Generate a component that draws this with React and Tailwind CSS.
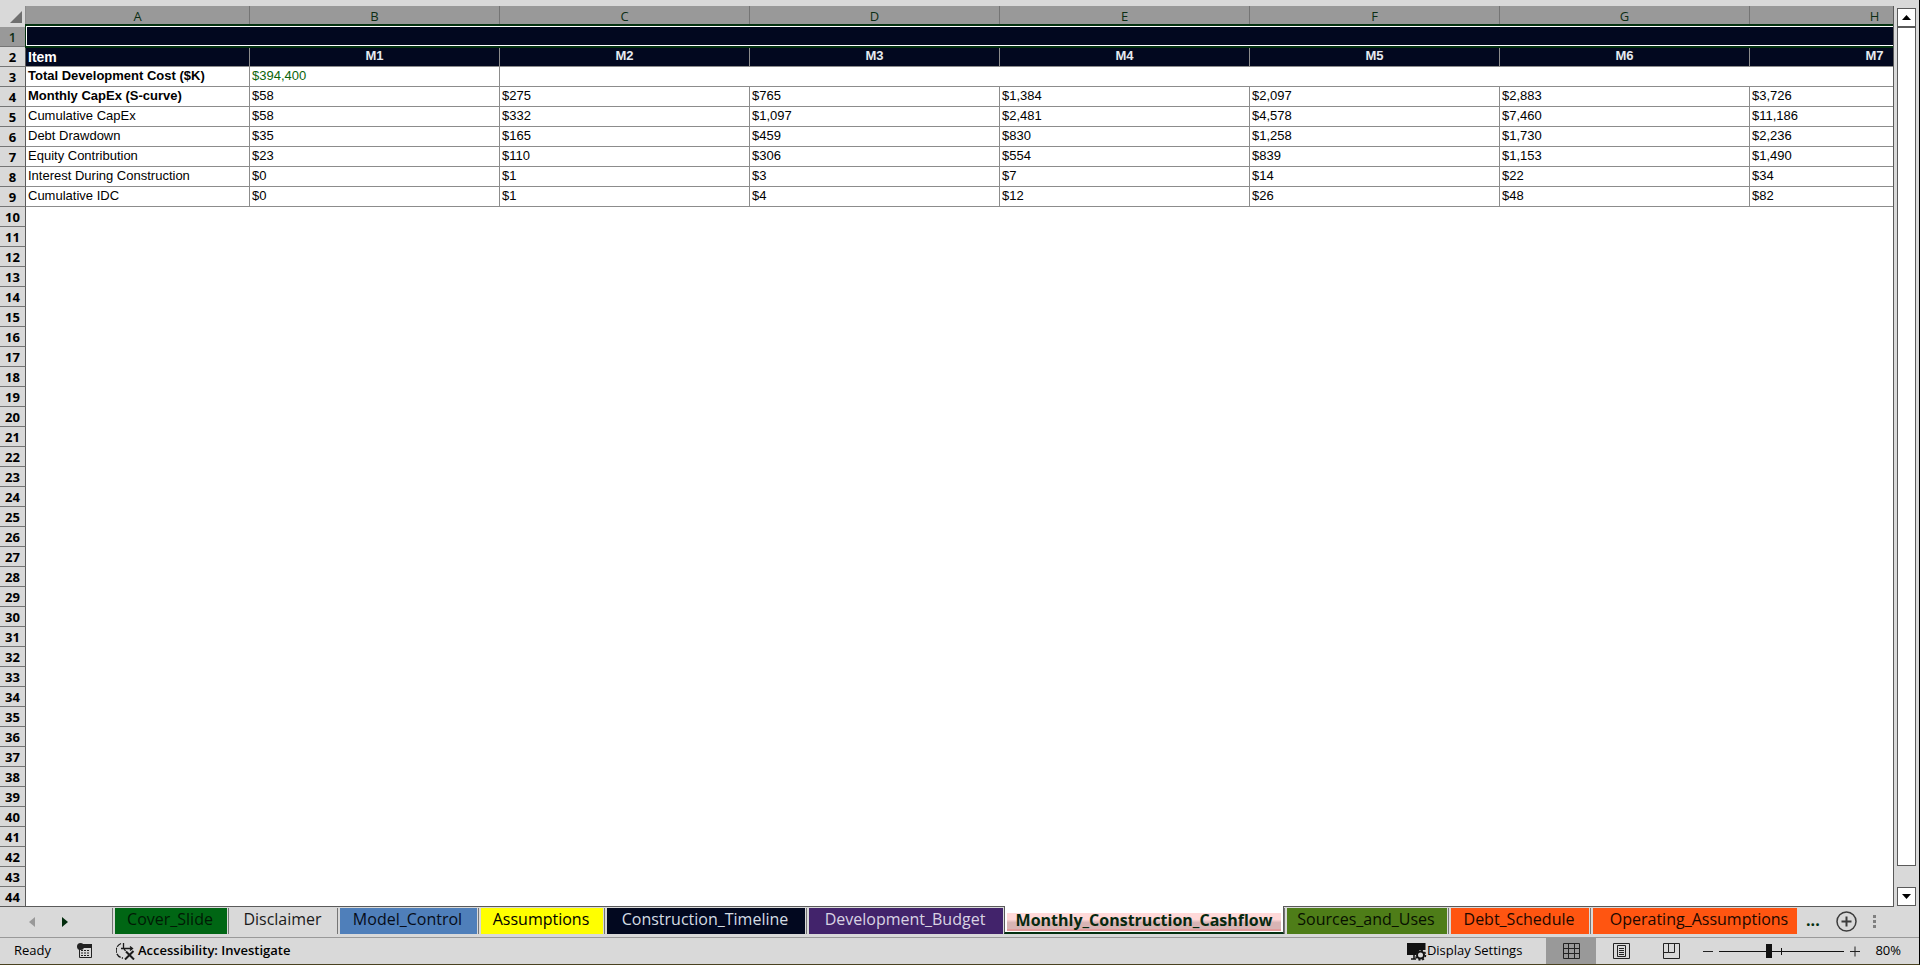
import React, { useState } from 'react';

const COLUMNS = ['A', 'B', 'C', 'D', 'E', 'F', 'G', 'H'];
const ROW_COUNT = 44;

const months = ['M1', 'M2', 'M3', 'M4', 'M5', 'M6', 'M7'];

const dataRows = {
  4: {
    label: 'Monthly CapEx (S-curve)',
    bold: true,
    values: ['$58', '$275', '$765', '$1,384', '$2,097', '$2,883', '$3,726'],
  },
  5: {
    label: 'Cumulative CapEx',
    values: ['$58', '$332', '$1,097', '$2,481', '$4,578', '$7,460', '$11,186'],
  },
  6: {
    label: 'Debt Drawdown',
    values: ['$35', '$165', '$459', '$830', '$1,258', '$1,730', '$2,236'],
  },
  7: {
    label: 'Equity Contribution',
    values: ['$23', '$110', '$306', '$554', '$839', '$1,153', '$1,490'],
  },
  8: {
    label: 'Interest During Construction',
    values: ['$0', '$1', '$3', '$7', '$14', '$22', '$34'],
  },
  9: {
    label: 'Cumulative IDC',
    values: ['$0', '$1', '$4', '$12', '$26', '$48', '$82'],
  },
};

const sheets = [
  { name: 'Cover_Slide', style: 'w-[112px] pr-[2px] bg-[#006614] text-[#001a05]' },
  { name: 'Disclaimer', style: 'w-[105px] pr-[2px] text-[#1a1a1a]' },
  { name: 'Model_Control', style: 'w-[137px] pr-[2px] bg-[#4f7fba] text-[#060c18]' },
  { name: 'Assumptions', style: 'w-[122px] pr-[2px] bg-[#ffff00] text-black' },
  { name: 'Construction_Timeline', style: 'w-[198px] pr-[2px] bg-[#02081f] text-[#d4dce4]' },
  { name: 'Development_Budget', style: 'w-[194px] pr-[2px] bg-[#42236b] text-[#d9d3e3]' },
  { name: 'Monthly_Construction_Cashflow', style: '' },
  { name: 'Sources_and_Uses', style: 'w-[160px] pr-[2px] bg-[#4e7d18] text-[#081000]' },
  { name: 'Debt_Schedule', style: 'w-[138px] pr-[2px] bg-[#ff5511] text-[#1c0800]' },
  { name: 'Operating_Assumptions', style: 'w-[204px] pl-2 bg-[#ff5511] text-[#1c0800]' },
];

const cellBorder = 'border-b border-r border-[#8c8c8c]';

function RowCells({ row }) {
  if (row === 1) {
    return <td colSpan={8} className="bg-[#02081f]"></td>;
  }

  if (row === 2) {
    return (
      <>
        <th className={`${cellBorder} bg-[#02081f] pl-[2px] text-left text-sm leading-4 font-bold text-white`}>
          Item
        </th>
        {months.map((month) => (
          <th key={month} className={`${cellBorder} bg-[#02081f] pb-[2px] text-center font-bold text-[#e6eaf0]`}>
            {month}
          </th>
        ))}
      </>
    );
  }

  if (row === 3) {
    return (
      <>
        <td className={`${cellBorder} pb-[2px] pl-[2px] font-bold`}>Total Development Cost ($K)</td>
        <td className={`${cellBorder} pb-[2px] pl-[2px] text-[#0a640a]`}>$394,400</td>
        <td colSpan={6} className="border-b border-[#8c8c8c]"></td>
      </>
    );
  }

  const data = dataRows[row];
  if (!data) {
    return <td colSpan={8}></td>;
  }

  return (
    <>
      <td className={`${cellBorder} pb-[2px] pl-[2px] ${data.bold ? 'font-bold' : ''}`}>{data.label}</td>
      {data.values.map((value, i) => (
        <td key={i} className={`${cellBorder} pb-[2px] pl-[2px]`}>
          {value}
        </td>
      ))}
    </>
  );
}

function Grid() {
  const rows = Array.from({ length: ROW_COUNT }, (_, i) => i + 1);

  return (
    <div className="relative min-w-0 flex-1 overflow-hidden border-r border-b border-[#5a5a5a] bg-white">
      <table className="-mb-px w-[2000px] table-fixed border-separate border-spacing-0 font-['Liberation_Sans',Arial,sans-serif] text-[13px] leading-4 text-black">
        <colgroup>
          <col className="w-[26px]" />
          <col className="w-[224px]" />
          {months.map((month) => (
            <col key={month} className="w-[250px]" />
          ))}
        </colgroup>
        <thead>
          <tr className="h-[21px] font-['Open_Sans','Noto_Sans',sans-serif]">
            <th className="border-r border-[#8c8c8c] bg-[#d9d9d9] p-0">
              <svg className="ml-[10px] h-3 w-3" viewBox="0 0 12 12">
                <path d="M12 0V12H0Z" fill="#6f6f6f" />
              </svg>
            </th>
            {COLUMNS.map((col) => (
              <th
                key={col}
                scope="col"
                className="border-r border-[#757575] bg-[#999999] p-0 pb-[2px] text-center font-medium text-[#0c2e14]"
              >
                {col}
              </th>
            ))}
          </tr>
        </thead>
        <tbody>
          {rows.map((row) => (
            <tr key={row} className="h-5">
              <th
                scope="row"
                className={`border-r border-b border-r-[#5a5a5a] border-b-[#757575] p-0 text-center font-['Open_Sans','Noto_Sans',sans-serif] ${
                  row === 1 ? 'bg-[#999999] font-semibold text-[#0c2e14]' : 'bg-[#d9d9d9] font-bold'
                }`}
              >
                {row}
              </th>
              <RowCells row={row} />
            </tr>
          ))}
        </tbody>
      </table>

      {/* Selection outline over row 1 */}
      <div className="pointer-events-none absolute top-[18px] right-0 left-[25px] h-6 border-y-2 border-l border-[#043210]">
        <div className="h-full border-y border-l border-white"></div>
      </div>
    </div>
  );
}

function VerticalScrollbar() {
  return (
    <div className="mr-[3px] ml-[3px] flex w-[19px] shrink-0 flex-col pt-[2px] pb-px">
      <button aria-label="Scroll up" className="flex h-5 shrink-0 items-center justify-center border border-b-2 border-[#5a5a5a] bg-white">
        <svg className="h-[5px] w-[9px]" viewBox="0 0 9 5">
          <path d="M4.5 0L9 5H0Z" fill="#000" />
        </svg>
      </button>
      <div className="flex-1 border border-t-0 border-[#5a5a5a] bg-white"></div>
      <div className="h-[21px] shrink-0"></div>
      <button aria-label="Scroll down" className="flex h-[19px] shrink-0 items-center justify-center border border-[#5a5a5a] bg-white">
        <svg className="h-[5px] w-[9px]" viewBox="0 0 9 5">
          <path d="M4.5 5L0 0H9Z" fill="#000" />
        </svg>
      </button>
    </div>
  );
}

function SheetTabs() {
  const [active, setActive] = useState('Monthly_Construction_Cashflow');

  return (
    <div className="relative flex h-[31px] shrink-0 items-start border-b border-[#999999] pr-10">
      <div className="flex h-[29px] w-[112px] shrink-0 items-center">
        <button aria-label="Previous sheets" className="ml-[29px]">
          <svg className="h-[10px] w-[6px]" viewBox="0 0 6 10">
            <path d="M6 0V10L0 5Z" fill="#999" />
          </svg>
        </button>
        <button aria-label="Next sheets" className="ml-[27px]">
          <svg className="h-[10px] w-[6px]" viewBox="0 0 6 10">
            <path d="M0 0V10L6 5Z" fill="#022c0d" />
          </svg>
        </button>
      </div>

      {sheets.map((sheet) =>
        sheet.name === active ? (
          <button
            key={sheet.name}
            className="-mt-px h-7 w-[280px] shrink-0 border-x border-b-2 border-x-[#5a5a5a] border-b-[#033010] bg-white px-[2px] pt-[7px] pb-px"
          >
            <span className="flex h-[18px] items-center justify-center border-b-2 border-[#e09a9a] bg-linear-to-b from-[#ffd9d9] from-40% to-[#d8b4b4] to-60% pb-[3px] text-base leading-none font-bold text-[#06290f]">
              {sheet.name}
            </span>
          </button>
        ) : (
          <div key={sheet.name} className="mt-px flex shrink-0">
            <span className="mr-px h-[26px] w-[2px] border-l border-[#757575]"></span>
            <button
              onClick={() => setActive(sheet.name)}
              className={`mr-px h-[26px] pb-1 text-center text-base leading-5 whitespace-nowrap ${sheet.style}`}
            >
              {sheet.name}
            </button>
          </div>
        )
      )}

      <button aria-label="More sheets" className="ml-2 h-[26px] text-base leading-6 font-bold text-[#033010]">
        ...
      </button>
      <button aria-label="New sheet" className="mt-1 ml-4">
        <svg className="h-[21px] w-[21px]" viewBox="0 0 21 21" fill="none" stroke="#3c3c3c">
          <circle cx="10.5" cy="10.5" r="9.5" strokeWidth="1.5" />
          <path d="M10.5 5.5V15.5M5.5 10.5H15.5" strokeWidth="2" />
        </svg>
      </button>
      <svg className="mt-2 ml-4 h-[14px] w-[3px]" viewBox="0 0 3 14" fill="#808080">
        <path d="M0 0H3V3H0ZM0 5H3V8H0ZM0 10H3V13H0Z" />
      </svg>
    </div>
  );
}

function StatusBar() {
  return (
    <div className="flex h-[26px] shrink-0 items-center text-[13px] text-black">
      <span className="ml-[14px] w-[63px]">Ready</span>
      <button aria-label="Record macro">
        <svg className="h-4 w-4" viewBox="0 0 16 16">
          <path d="M2.5 4V14.5H14.5V1.5H6" fill="none" stroke="#222" />
          <path d="M6 1H15V5H6Z" fill="#222" />
          <circle cx="3.5" cy="3.5" r="3.5" fill="#222" />
          <path d="M4 7.5H13M4 10H13M4 12.5H13" stroke="#222" strokeDasharray="2 1" />
        </svg>
      </button>
      <button className="ml-[23px] flex items-center gap-[3px] font-semibold">
        <svg className="h-[18px] w-[19px]" viewBox="0 0 19 18" fill="none" stroke="#1a1a1a" strokeWidth="1.3">
          <path d="M5 1.5A7.5 7.5 0 0 0 7 16" strokeDasharray="5 1.2" />
          <path d="M7.5 1V6L9.500 9M5 6.500H16M14 4.500L16.500 6.500L14 8.500" />
          <path d="M10 9.500L18 17.500M17.500 9L9 17.500" strokeWidth="2" />
        </svg>
        Accessibility: Investigate
      </button>

      <div className="ml-auto flex h-full items-center">
        <button className="flex items-center">
          <svg className="h-[19px] w-[21px]" viewBox="0 0 21 19">
            <path d="M1 1H19.5V8H13L9.500 13H1Z" fill="#111" />
            <path d="M5 17H10M8 13V17" stroke="#111" strokeWidth="1.5" />
            <circle cx="14.500" cy="13" r="3.500" fill="none" stroke="#111" strokeWidth="2" />
            <circle cx="14.500" cy="13" r="5" fill="none" stroke="#111" strokeWidth="1.5" strokeDasharray="2 1.9" />
          </svg>
          Display Settings
        </button>
        <button aria-label="Normal view" className="ml-6 flex h-full w-[50px] items-center justify-center bg-[#999999]">
          <svg className="h-4 w-[17px]" viewBox="0 0 17 16" fill="none" stroke="#222">
            <path d="M.5.5H16.5V15.5H.5ZM5.5.5V15.5M11.5.5V15.5M.5 5.5H16.5M.5 10.5H16.5" />
          </svg>
        </button>
        <button aria-label="Page layout view" className="flex h-full w-[50px] items-center justify-center">
          <svg className="h-4 w-[17px]" viewBox="0 0 17 16" fill="none" stroke="#222">
            <path d="M.5.5H16.5V15.5H.5ZM4.5 2.5H12.5V13.5H4.5ZM6 5.5H11M6 7.5H11M6 9.5H11M6 11.5H11" />
          </svg>
        </button>
        <button aria-label="Page break preview" className="flex h-full w-[50px] items-center justify-center">
          <svg className="h-4 w-[17px]" viewBox="0 0 17 16" fill="none" stroke="#222">
            <path d="M.5.5H16.5V15.5H.5ZM5.5.5V9.5H11.5V.5M.5 9.5H5.5" />
          </svg>
        </button>
        <button aria-label="Zoom out" className="ml-[7px]">
          <svg className="h-[11px] w-[10px]" viewBox="0 0 10 11">
            <path d="M0 5.5H10" stroke="#222" />
          </svg>
        </button>
        <svg className="mx-[6px] h-4 w-[125px]" viewBox="0 0 125 16" stroke="#111">
          <path d="M0 8.5H125M62.5 5V12" />
          <path d="M47 1H53V15H47Z" fill="#111" stroke="none" />
        </svg>
        <button aria-label="Zoom in">
          <svg className="h-[11px] w-[10px]" viewBox="0 0 10 11">
            <path d="M0 5.5H10M5 .5V10.5" stroke="#222" />
          </svg>
        </button>
        <button className="mr-[18px] ml-[15px]">80%</button>
      </div>
    </div>
  );
}

export default function App() {
  return (
    <div className="flex flex-col overflow-hidden border-r border-b border-r-black border-b-[#4a4220] bg-[#d9d9d9] pt-[6px] font-['Open_Sans','Noto_Sans',sans-serif]">
      <div className="flex">
        <Grid />
        <VerticalScrollbar />
      </div>
      <SheetTabs />
      <StatusBar />
    </div>
  );
}
